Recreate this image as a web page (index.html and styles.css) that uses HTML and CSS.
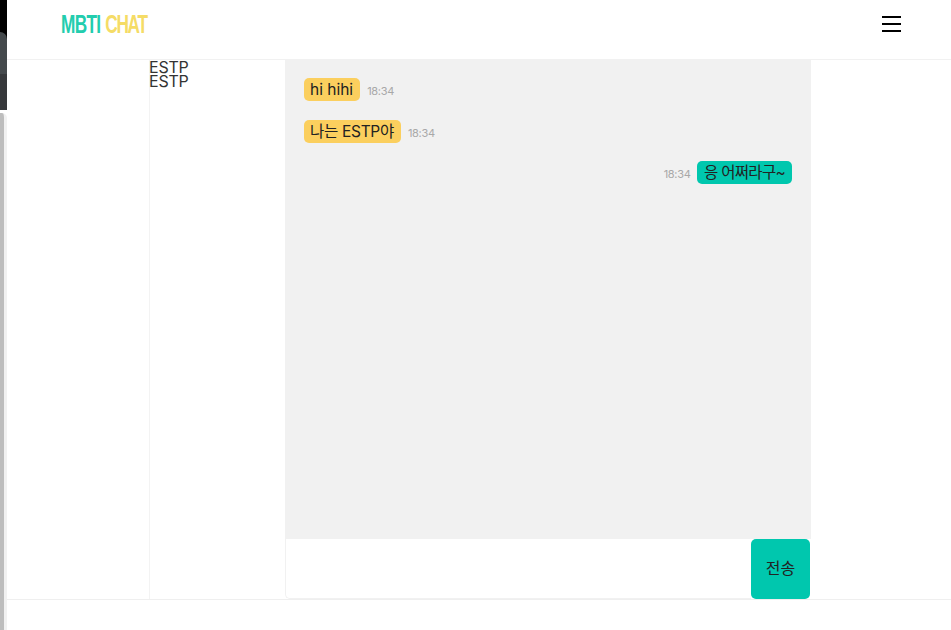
FILE: index.html
```html
<!DOCTYPE html>
<html lang="ko">
<head>
<meta charset="utf-8">
<title>MBTI CHAT</title>
<link rel="stylesheet" href="styles.css">
</head>
<body>
<div class="strip">
  <div class="strip-black"><div class="strip-dark"></div></div>
  <div class="strip-gray"></div>
</div>
<div class="page">
  <header class="header">
    <div class="logo"><span class="logo-a">MBTI</span> <span class="logo-b">CHAT</span></div>
    <button class="menu" aria-label="menu"><span></span><span></span><span></span></button>
  </header>
  <main class="main">
    <aside class="users">
      <div class="user">ESTP</div>
      <div class="user">ESTP</div>
    </aside>
    <section class="chat">
      <div class="messages">
        <div class="msg"><span class="bubble yellow latin">hi hihi</span><span class="time">18:34</span></div>
        <div class="msg"><span class="bubble yellow mixed">나는 ESTP야</span><span class="time">18:34</span></div>
        <div class="msg mine"><span class="time">18:34</span><span class="bubble teal">응 어쩌라구~</span></div>
      </div>
      <form class="composer">
        <div class="input"></div>
        <button class="send" type="button">전송</button>
      </form>
    </section>
  </main>
</div>
</body>
</html>
```
FILE: styles.css
```css
* { box-sizing: border-box; }
html, body { margin: 0; height: 630px; overflow: hidden; background: #fff; }
body { display: flex; font-family: Inter, "Noto Sans CJK KR", sans-serif; color: #000; }
.strip { width: 7px; flex: none; display: flex; flex-direction: column; background: #fff; }
.strip-black { height: 110px; background: #000; padding-top: 32px; }
.strip-dark { height: 78px; background: linear-gradient(#44494c 0 42px, #36383b 42px); border-radius: 0 7px 0 0; }
.strip-gray { flex: 1; margin-top: 3px; background: #bdbdbd; border-right: 3px solid #f1f1f1; border-radius: 0 5px 0 0; }
.page { flex: 1; min-width: 0; display: flex; flex-direction: column; height: 600px; border-bottom: 1px solid #efefef; }
.header { height: 60px; flex: none; display: flex; align-items: center; justify-content: space-between; padding: 0 50px 11px 54px; border-bottom: 1px solid #f1f1f1; }
.logo { font-family: "Liberation Sans", sans-serif; font-size: 26.5px; font-weight: 700; letter-spacing: -1px; white-space: nowrap; transform: scaleX(.65); transform-origin: left center; }
.logo-a { color: #23cdae; }
.logo-b { color: #f5dc66; letter-spacing: -2px; margin-left: 1px; }
.menu { width: 19px; height: 16px; padding: 0; border: 0; background: none; display: flex; flex-direction: column; justify-content: space-between; }
.menu span { display: block; height: 2px; background: #000; }
.main { flex: 1; min-height: 0; display: flex; padding: 0 140px 0 142px; }
.users { width: 136px; flex: none; border-left: 1px solid #f3f3f3; font-size: 16px; line-height: 14px; color: #333; letter-spacing: -.2px; }
.user { margin-left: -1px; }
.chat { flex: 1; min-width: 0; display: flex; flex-direction: column; }
.messages { flex: 1; min-height: 0; background: #f1f1f1; padding: 18px 19px 0 18.5px; display: flex; flex-direction: column; gap: 18.5px; }
.msg { display: flex; align-items: flex-end; gap: 7px; height: 23px; }
.mine { justify-content: flex-end; }
.bubble { height: 23px; line-height: 23px; padding: 0 7px 0 6.5px; border-radius: 5px; font-size: 15.5px; white-space: nowrap; color: #222; }
.latin { letter-spacing: 0; }
.mixed { letter-spacing: -.3px; }
.yellow { background: #fbcf5e; }
.teal { background: #00c7ae; letter-spacing: -.7px; }
.time { font-size: 11px; letter-spacing: -.3px; color: #a8a8a8; line-height: 14px; margin-bottom: 3px; }
.composer { height: 60px; flex: none; display: flex; background: #fff; }
.input { flex: 1; border: 1px solid #f1f1f1; border-right: 0; border-top: 0; border-radius: 0 0 0 5px; }
.send { width: 59px; height: 60px; border: 0; border-radius: 5px; background: #00c7ae; color: #222; font: 16px Inter, "Noto Sans CJK KR", sans-serif; padding: 0 0 4px; margin-right: 1px; }
```
